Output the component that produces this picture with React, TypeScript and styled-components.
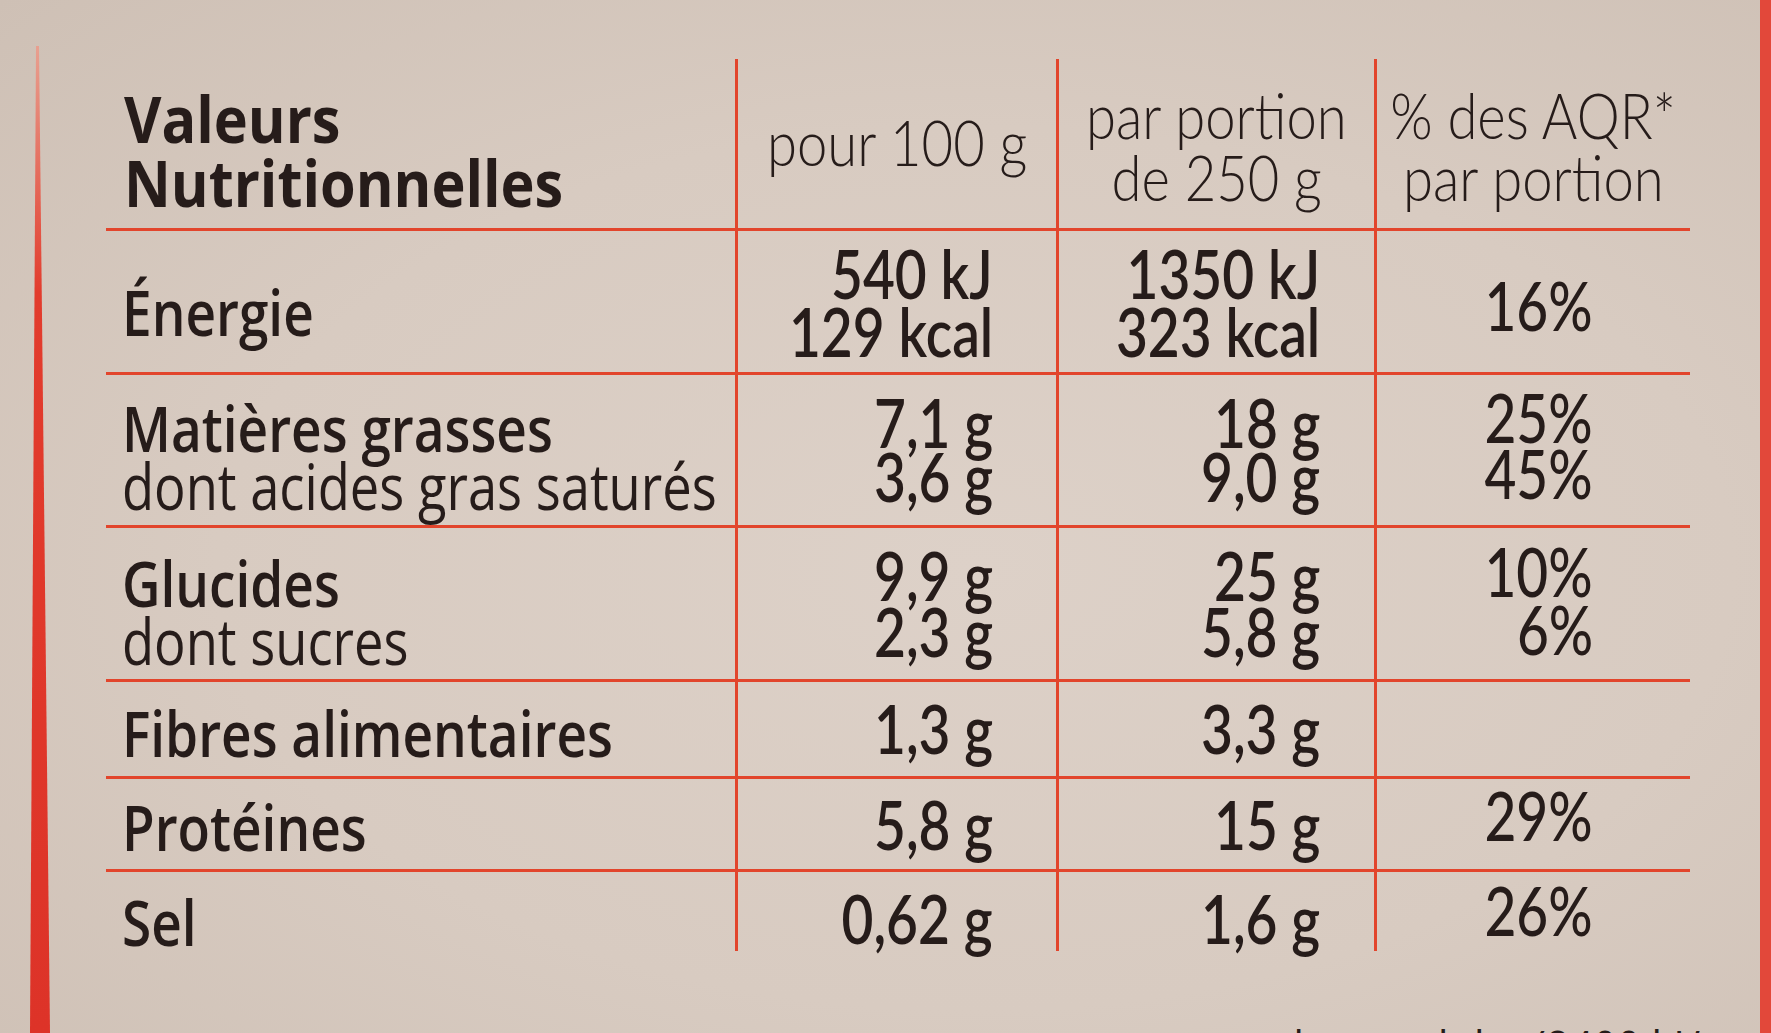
import React from 'react';
import styled, { createGlobalStyle } from 'styled-components';

const RED = '#e2452c';
const INK = '#261c1a';

const GlobalStyle = createGlobalStyle`
  html, body {
    margin: 0;
    padding: 0;
    width: 1771px;
    height: 1033px;
    overflow: hidden;
  }
  body {
    background: #d8cbc1;
    font-family: "Open Sans", "Noto Sans", sans-serif;
    color: ${INK};
  }
`;

const Page = styled.div`
  display: flex;
  width: 1771px;
  height: 1033px;
  overflow: hidden;
  background: radial-gradient(ellipse at 55% 55%, #ddd1c8 0%, #d8cbc1 55%, #cec0b5 100%);
`;

const Gutter = styled.div`
  width: 30px;
  flex: none;
`;

const LeftEdge = styled.div`
  width: 20px;
  flex: none;
  margin-top: 46px;
  background: linear-gradient(#e8a090, #e23c2d 25%, #dd3328);
  clip-path: polygon(6px 0, 9px 0, 20px 100%, 0 100%);
`;

const Panel = styled.div`
  flex: 1;
  display: flex;
  flex-direction: column;
  padding: 59px 0 0 56px;
`;

const RightEdge = styled.div`
  width: 11px;
  flex: none;
  background: #e2483a;
`;

const Table = styled.div`
  display: flex;
  flex-direction: column;
  width: 1584px;
`;

const Row = styled.div<{ $h: number; $last?: boolean }>`
  display: grid;
  grid-template-columns: 629px 321px 318px 316px;
  height: ${(p) => p.$h}px;
  box-sizing: border-box;
  border-bottom: ${(p) => (p.$last ? 'none' : `3px solid ${RED}`)};
`;

type Align = 'left' | 'right' | 'center';

const Cell = styled.div<{ $align: Align; $pb: number; $pr?: number; $pl?: number; $divider?: boolean }>`
  display: flex;
  flex-direction: column;
  justify-content: flex-end;
  align-items: ${(p) => (p.$align === 'left' ? 'flex-start' : p.$align === 'right' ? 'flex-end' : 'center')};
  padding: 0 ${(p) => p.$pr ?? 0}px ${(p) => p.$pb}px ${(p) => p.$pl ?? 0}px;
  border-left: ${(p) => (p.$divider ? `3px solid ${RED}` : 'none')};
  box-sizing: border-box;
  min-width: 0;
`;

const labelScale = (w: number) => (w >= 700 ? 0.9 : w >= 600 ? 0.83 : 0.82);

const Label = styled.span<{ $w?: number; $lh: number }>`
  display: block;
  white-space: nowrap;
  font-family: "Open Sans", "Noto Sans", sans-serif;
  font-size: 64px;
  font-weight: ${(p) => p.$w ?? 600};
  line-height: ${(p) => p.$lh}px;
  transform: scaleX(${(p) => labelScale(p.$w ?? 600)});
  transform-origin: left center;
`;

const Num = styled.span<{ $w?: number; $lh: number; $size?: number; $sx?: number; $origin?: Align }>`
  display: block;
  white-space: nowrap;
  font-family: Lato, "Open Sans", sans-serif;
  font-size: ${(p) => p.$size ?? 68}px;
  font-weight: ${(p) => p.$w ?? 600};
  line-height: ${(p) => p.$lh}px;
  transform: scaleX(${(p) => p.$sx ?? 0.81});
  transform-origin: ${(p) => p.$origin ?? 'right'} center;
`;

const Footnote = styled.div`
  margin-top: 67px;
  padding-right: 60px;
  text-align: right;
  font-family: "Open Sans", "Noto Sans", sans-serif;
  font-size: 52px;
  line-height: 60px;
  white-space: nowrap;
  span {
    display: inline-block;
    transform: scaleX(0.8);
    transform-origin: right center;
  }
`;

interface NutRow {
  h: number;
  labels: { t: string; w: number }[];
  labelLh: number;
  labelPb: number;
  per100: string[];
  portion: string[];
  valLh: number;
  valPb: number;
  pct: string[];
  pctLh: number;
  pctPb: number;
}

const rows: NutRow[] = [
  {
    h: 144,
    labels: [{ t: 'Énergie', w: 600 }],
    labelLh: 58,
    labelPb: 31,
    per100: ['540 kJ', '129 kcal'],
    portion: ['1350 kJ', '323 kcal'],
    valLh: 58,
    valPb: 12,
    pct: ['16%'],
    pctLh: 58,
    pctPb: 38,
  },
  {
    h: 153,
    labels: [
      { t: 'Matières grasses', w: 600 },
      { t: 'dont acides gras saturés', w: 400 },
    ],
    labelLh: 58,
    labelPb: 10,
    per100: ['7,1 g', '3,6 g'],
    portion: ['18 g', '9,0 g'],
    valLh: 54,
    valPb: 22,
    pct: ['25%', '45%'],
    pctLh: 56,
    pctPb: 24,
  },
  {
    h: 154,
    labels: [
      { t: 'Glucides', w: 600 },
      { t: 'dont sucres', w: 400 },
    ],
    labelLh: 58,
    labelPb: 9,
    per100: ['9,9 g', '2,3 g'],
    portion: ['25 g', '5,8 g'],
    valLh: 56,
    valPb: 20,
    pct: ['10%', '6%'],
    pctLh: 58,
    pctPb: 21,
  },
  {
    h: 97,
    labels: [{ t: 'Fibres alimentaires', w: 600 }],
    labelLh: 58,
    labelPb: 14,
    per100: ['1,3 g'],
    portion: ['3,3 g'],
    valLh: 54,
    valPb: 21,
    pct: [],
    pctLh: 54,
    pctPb: 20,
  },
  {
    h: 93,
    labels: [{ t: 'Protéines', w: 600 }],
    labelLh: 58,
    labelPb: 13,
    per100: ['5,8 g'],
    portion: ['15 g'],
    valLh: 54,
    valPb: 18,
    pct: ['29%'],
    pctLh: 54,
    pctPb: 27,
  },
  {
    h: 79,
    labels: [{ t: 'Sel', w: 600 }],
    labelLh: 58,
    labelPb: 0,
    per100: ['0,62 g'],
    portion: ['1,6 g'],
    valLh: 54,
    valPb: 6,
    pct: ['26%'],
    pctLh: 54,
    pctPb: 14,
  },
];

export default function App() {
  return (
    <>
      <GlobalStyle />
      <Page>
        <Gutter />
        <LeftEdge />
        <Panel>
          <Table>
            <Row $h={172}>
              <Cell $align="left" $pl={18} $pb={13}>
                <Label $w={700} $lh={64}>Valeurs</Label>
                <Label $w={700} $lh={64}>Nutritionnelles</Label>
              </Cell>
              <Cell $align="center" $pb={55} $divider>
                <Num $w={300} $lh={62} $size={64} $sx={0.85} $origin="center">pour 100 g</Num>
              </Cell>
              <Cell $align="center" $pb={20} $divider>
                <Num $w={300} $lh={62} $size={64} $sx={0.85} $origin="center">par portion</Num>
                <Num $w={300} $lh={62} $size={64} $sx={0.85} $origin="center">de 250 g</Num>
              </Cell>
              <Cell $align="center" $pb={20} $divider>
                <Num $w={300} $lh={62} $size={64} $sx={0.85} $origin="center">% des AQR*</Num>
                <Num $w={300} $lh={62} $size={64} $sx={0.85} $origin="center">par portion</Num>
              </Cell>
            </Row>
            {rows.map((r, i) => (
              <Row key={i} $h={r.h} $last={i === rows.length - 1}>
                <Cell $align="left" $pl={16} $pb={r.labelPb}>
                  {r.labels.map((l) => (
                    <Label key={l.t} $w={l.w} $lh={r.labelLh}>
                      {l.t}
                    </Label>
                  ))}
                </Cell>
                <Cell $align="right" $pr={63} $pb={r.valPb} $divider>
                  {r.per100.map((v) => (
                    <Num key={v} $lh={r.valLh}>
                      {v}
                    </Num>
                  ))}
                </Cell>
                <Cell $align="right" $pr={54} $pb={r.valPb} $divider>
                  {r.portion.map((v) => (
                    <Num key={v} $lh={r.valLh}>
                      {v}
                    </Num>
                  ))}
                </Cell>
                <Cell $align="right" $pr={97} $pb={r.pctPb} $divider>
                  {r.pct.map((v) => (
                    <Num key={v} $w={500} $lh={r.pctLh}>
                      {v}
                    </Num>
                  ))}
                </Cell>
              </Row>
            ))}
          </Table>
          <Footnote>
            <span>de un adulte (8400 kJ/</span>
          </Footnote>
        </Panel>
        <RightEdge />
      </Page>
    </>
  );
}
